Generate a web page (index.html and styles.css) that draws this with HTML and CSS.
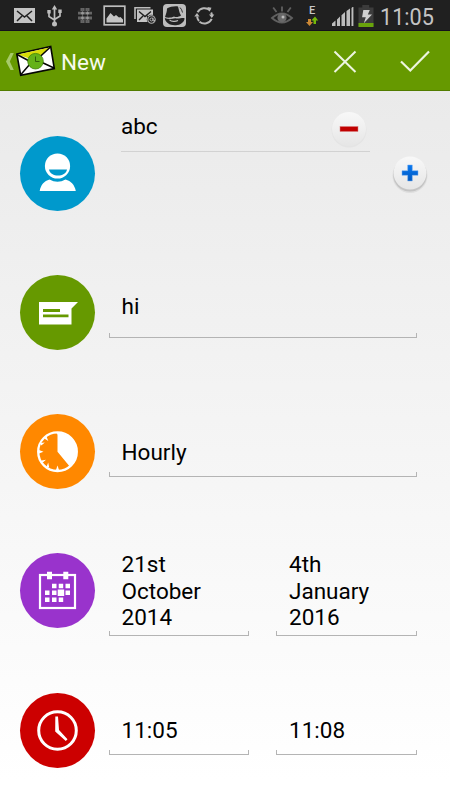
FILE: index.html
```html
<!DOCTYPE html>
<html lang="en">
<head>
<meta charset="utf-8">
<title>New</title>
<link rel="stylesheet" href="styles.css">
</head>
<body>
<div class="screen">
  <header class="status">
    <svg class="status-icons" width="220" height="31" viewBox="0 0 220 31">
      <rect x="14" y="8" width="21" height="15" fill="#c4c4c4"/>
      <path d="M17 11l7.500 6 7.500-6M17 21l5-5M32 21l-5-5" fill="none" stroke="#202020" stroke-width="1.500"/>
      <path d="M54.500 8v15M49 12v4.500l5.500 3.500M60 11v5l-5.500 3.500" fill="none" stroke="#bdbdbd" stroke-width="1.700"/>
      <path d="M51.800 9.500L54.500 5l2.700 4.500zM47.300 10h3.400v3.500h-3.400zM58.300 9.500h3.400V13h-3.400z" fill="#bdbdbd"/>
      <circle cx="54.500" cy="24" r="2.500" fill="#bdbdbd"/>
      <path d="M80.500 9.500h9M78 13.200h14M78 18h14M80.500 21.500h9" fill="none" stroke="#666" stroke-width="2.800" stroke-dasharray="4 1"/>
      <path d="M82.500 8.500v14M87.500 8.500v14" fill="none" stroke="#5c5c5c" stroke-width="1.200"/>
      <g fill="#999"><circle cx="82.500" cy="13.200" r="1.400"/><circle cx="87.500" cy="13.200" r="1.400"/><circle cx="82.500" cy="18" r="1.400"/><circle cx="87.500" cy="18" r="1.400"/></g>
      <rect x="104.200" y="6.200" width="20.600" height="18.600" fill="none" stroke="#bdbdbd" stroke-width="1.700"/>
      <path d="M106.500 22.500v-4l4-5.500 3.500 3.500 2-1.500 3 2.500 1.500-.5 2.500 2.500v3z" fill="#c4c4c4"/>
      <path d="M135 19V7.700h15.500" fill="none" stroke="#bdbdbd" stroke-width="1.600"/>
      <rect x="137" y="9.500" width="16" height="12.500" fill="#c4c4c4"/>
      <path d="M139 11.500l6 5 6-5M139 20l4-4M151 20l-4-4" fill="none" stroke="#202020" stroke-width="1.400"/>
      <circle cx="151.500" cy="19.500" r="4.700" fill="#202020"/>
      <circle cx="151.500" cy="19.500" r="3.700" fill="none" stroke="#b5b5b5" stroke-width="1.100"/>
      <circle cx="151.500" cy="19.500" r="1.500" fill="none" stroke="#b5b5b5"/>
      <path d="M153 17.500v3.200q1 1 2-.7" fill="none" stroke="#b5b5b5"/>
      <rect x="163" y="4" width="23" height="23" rx="4" fill="#bdbdbd"/>
      <path d="M167 8.500c3-1.500 7-2.500 11-2 1 3 1 6 3 9-2 1.500-5 2-7 1-3 1.500-7 1.500-9 .5 1-3 2-5.500 2-8.500z" fill="#222"/>
      <path d="M164.800 18c3 1.300 7 1 10.500.3 3 1 6.500-.8 9-.3 1 2-2 6.500-7 7-6 1-12-1.500-12.500-7z" fill="#222"/>
      <path d="M169.500 19.800c2 2 6 2 8.500.8" fill="none" stroke="#bdbdbd" stroke-width="1.100"/>
      <path d="M180 7.500q2 2 2.500 5" fill="none" stroke="#333" stroke-width="1"/>
      <path d="M197.600 12.200A8 8 0 0 1 210 10.300M211.700 18.800A8 8 0 0 1 199.500 21.700M212 16.500a8 8 0 0 0-.8-4M199 21a8 8 0 0 1-1.900-4.500" fill="none" stroke="#b8b8b8" stroke-width="2"/>
      <path d="M194.300 16.500h5.200L197 13zM209 14.500h5.300L211.800 18zM207.500 7l4 .8-2 4z" fill="#b8b8b8"/>
    </svg>
    <svg class="status-right" width="110" height="31" viewBox="267 0 110 31">
      <g fill="none" stroke="#606060" stroke-width="1.800">
        <path d="M272 18q10-9 20 0-10 9-20 0z"/>
        <path d="M282 11.500V6.500M276.500 12l-3.300-4.500M287.500 12l3.300-4.500"/>
      </g>
      <circle cx="282" cy="17.700" r="4.600" fill="#696969"/><circle cx="283" cy="17" r="1.500" fill="#bbb"/>
      <text class="network" x="309" y="14.200">E</text>
      <path d="M308 19v3h-2l3.500 4 3.500-4h-2v-3z" fill="#cc8835"/>
      <path d="M313.500 24v-3.500h-2.200l3.700-4 3.200 4H316V24z" fill="#75b808"/>
      <path d="M332 26v-2.500l3.500-3V26zM337 26v-6.500l3-3V26zM341.500 26V15.200l3.500-3.200v14zM346.500 26V11l3.500-2.500V26zM351.500 26V8l1-1h.9v19z" fill="#bdbdbd"/>
      <path d="M358.500 7.500h3.800V5h6.900v2.500h4.300v19h-15z" fill="#3c3c3c"/>
      <rect x="358.500" y="23" width="15" height="4" fill="#69a40b"/>
      <path d="M363.300 10h6.500l-2 4.500h4.200l-8.200 8.800 2-6h-3.700z" fill="#d0d0d0"/>
    </svg>
    <span class="clock">11:05</span>
  </header>

  <nav class="bar">
    <svg class="home" width="58" height="59" viewBox="0 31 58 59">
      <path d="M6 61.500L10.500 53H13.800L9.800 61.500 13.800 70H10.500z" fill="#a7ca6a"/>
      <path d="M16.800 54L50.700 46.500 54.300 68.500 20.700 75.300z" fill="#fff" stroke="#050505" stroke-width="1.600"/>
      <path d="M17.800 54.600L49.500 47.500 36 61z" fill="#d8dc08"/>
      <path d="M17 54.500L33 63 50.500 47M20.500 75L30 64M54 68L41 62" fill="none" stroke="#050505" stroke-width="1.500"/>
      <circle cx="35.500" cy="61.200" r="7.800" fill="#65b218" stroke="#3d8208" stroke-width=".8"/>
      <path d="M35.500 56.500v5h4" fill="none" stroke="#315d0b" stroke-width="1"/>
    </svg>
    <h1 class="title">New</h1>
    <svg class="action" width="70" height="59" viewBox="310 31 70 59"><path d="M334.500 51.500l21 20.500M355.500 51.500l-21 20.500" fill="none" stroke="#edf5df" stroke-width="2"/></svg>
    <svg class="action" width="70" height="59" viewBox="380 31 70 59"><path d="M401 61.500l9.300 9 18.700-19" fill="none" stroke="#edf5df" stroke-width="2.200"/></svg>
  </nav>

  <main class="form">
    <section class="row">
      <svg class="badge blue" viewBox="0 0 75 75">
        <circle cx="37.500" cy="30" r="12.600" fill="#fff"/>
        <path d="M29 33.500h18c-1.500 8-16.500 8-18 0z" fill="#09c"/>
        <path d="M19.700 55c1-6 4.500-10 9.800-11.500q8 4.500 16 0C51 45 54.700 49 55.800 55z" fill="#fff"/>
      </svg>
      <div class="people">
        <div class="person"><span>abc</span>
          <svg class="remove" width="38" height="38" viewBox="0 0 38 38">
            <defs><linearGradient id="btn" x2="0" y2="1"><stop stop-color="#f8f8f8"/><stop offset="1" stop-color="#e6e6e6"/></linearGradient></defs>
            <circle cx="19" cy="20" r="17.500" fill="#e4e4e4"/><circle cx="19" cy="19" r="17" fill="url(#btn)"/>
            <rect x="10" y="16.500" width="18" height="5" fill="#c00000" stroke="#d98080" stroke-width=".5"/>
          </svg>
        </div>
        <svg class="add" width="38" height="38" viewBox="0 0 38 38">
          <defs><linearGradient id="plus" x2="0" y2="1"><stop stop-color="#0878f0"/><stop offset="1" stop-color="#0058c0"/></linearGradient></defs>
          <circle cx="19" cy="20.500" r="17.500" fill="#dedede"/><circle cx="19" cy="19.800" r="16.800" fill="#c4c4c4"/><circle cx="19" cy="18" r="16.500" fill="url(#btn)"/>
          <path d="M16.700 10h4.600v5.700H27v4.600h-5.700V26h-4.600v-5.700H11v-4.600h5.700z" fill="url(#plus)" stroke="#77aff0" stroke-width=".5"/>
        </svg>
      </div>
    </section>

    <section class="row">
      <svg class="badge green" viewBox="0 0 75 75">
        <path d="M19 27h39l-6.500 6.500v16H19z" fill="#fff"/><path d="M23 34h17v3H23zM23 39.500h25.500v2.700H23z" fill="#690"/>
      </svg>
      <div class="fields message"><div class="field">hi</div></div>
    </section>

    <section class="row">
      <svg class="badge orange" viewBox="0 0 75 75">
        <circle cx="37.500" cy="37.700" r="19.300" fill="none" stroke="#fff" stroke-width="2.300"/>
        <path d="M37.500 37.700V21q0-2-2-2.500a19.200 19.200 0 0 1 14 33.800z" fill="#fff"/>
        <path d="M19 36l4.500 1.700L19 39.400zM35.800 56.500l1.700-5 1.700 5zM26.500 22.500l1.800 4.500-4-2.500zM20.500 29l4.300-.5-3.500 3zM21.500 46.500l4.500-.7-3.500 3zM26.500 53l1.700-4.500 1 5z" fill="#fff"/>
      </svg>
      <div class="fields repeat"><div class="field">Hourly</div></div>
    </section>

    <section class="row">
      <svg class="badge purple" viewBox="0 0 75 75">
        <rect x="20" y="22" width="35" height="33" fill="none" stroke="#fff" stroke-width="2.200"/>
        <path d="M27 18.700h5v7.500h-5zM43.300 18.700h5v7.500h-5z" fill="#fff"/>
        <path d="M32 30.700h4.500v4.500H32zM38.700 30.700h4.500v4.500h-4.500zM45.500 30.700H50v4.500h-4.500zM25 37.500h4.500V42H25zM32 37.500h4.500V42H32zM37.700 36.500h6.500V43h-6.500zM45.500 37.500H50V42h-4.500zM25 44.500h4.500V49H25zM32 44.500h4.500V49H32zM38.700 44.500h4.500V49h-4.500z" fill="#fff"/>
      </svg>
      <div class="fields dates"><div class="field">21st October 2014</div><div class="field">4th January 2016</div></div>
    </section>

    <section class="row">
      <svg class="badge red" viewBox="0 0 75 75">
        <circle cx="37.500" cy="37.500" r="18.800" fill="none" stroke="#fff" stroke-width="3"/>
        <path d="M35.300 23.500h2.700L39 37l8.500 9.300-1.700 1.700-10.600-9.500z" fill="#fff"/>
      </svg>
      <div class="fields times"><div class="field">11:05</div><div class="field">11:08</div></div>
    </section>
  </main>
</div>
</body>
</html>
```
FILE: styles.css
```css
* { box-sizing: border-box; }
body { margin: 0; font-family: Roboto, "Liberation Sans", sans-serif; color: #000; }
svg { display: block; flex: none; }
.screen { width: 450px; height: 800px; display: flex; flex-direction: column; overflow: hidden; background: linear-gradient(#eaeaea 91px, #fff 780px); }
.status { height: 31px; flex: none; display: flex; background: #202020; border-bottom: 1px solid #14101c; }
.status-right { margin-left: 47px; }
.network { font-size: 11px; font-weight: 500; fill: #c8c8c8; }
.clock { margin-left: 3px; font-size: 23.5px; line-height: 34px; color: #c4c4c4; white-space: nowrap; transform: scaleX(.92); transform-origin: left; }
.bar { height: 60px; flex: none; display: flex; background: #690; border-bottom: 1px solid #527c00; }
.title { margin: 0; padding-left: 3px; flex: 1; color: #f7faf0; font-size: 22.5px; font-weight: 400; line-height: 62px; }
.form { padding: 12.5px 0 0 20px; }
.row { height: 139.25px; display: flex; align-items: flex-start; font-size: 22.5px; line-height: 26.3px; }
.badge { width: 75px; height: 75px; margin-top: 32px; border-radius: 50%; }
.blue { background: #09c; }
.green { background: #690; }
.orange { background: #f80; }
.purple { background: #93c; }
.red { background: #c00; }
.people { margin-left: 26px; width: 308px; }
.person { width: 249px; height: 48px; padding-top: 6px; display: flex; justify-content: space-between; border-bottom: 1px solid #d2d2d2; }
.person span { padding-top: 3.5px; }
.remove { margin-right: 2px; }
.add { margin: 3px 0 0 270px; }
.fields { margin-left: 13.5px; width: 308px; display: flex; gap: 27px; }
.field { flex: 1; min-width: 0; padding-left: 13px; padding-right: 13px; border-bottom: 1px solid #b4b4b4; background: linear-gradient(#b4b4b4, #b4b4b4) left bottom / 1px 4px no-repeat, linear-gradient(#b4b4b4, #b4b4b4) right bottom / 1px 4px no-repeat; }
.message { margin-top: 50.3px; height: 45px; }
.repeat { margin-top: 56.500px; height: 38.500px; }
.dates { margin-top: 30px; height: 85px; }
.times { margin-top: 56.500px; height: 38px; }
```
